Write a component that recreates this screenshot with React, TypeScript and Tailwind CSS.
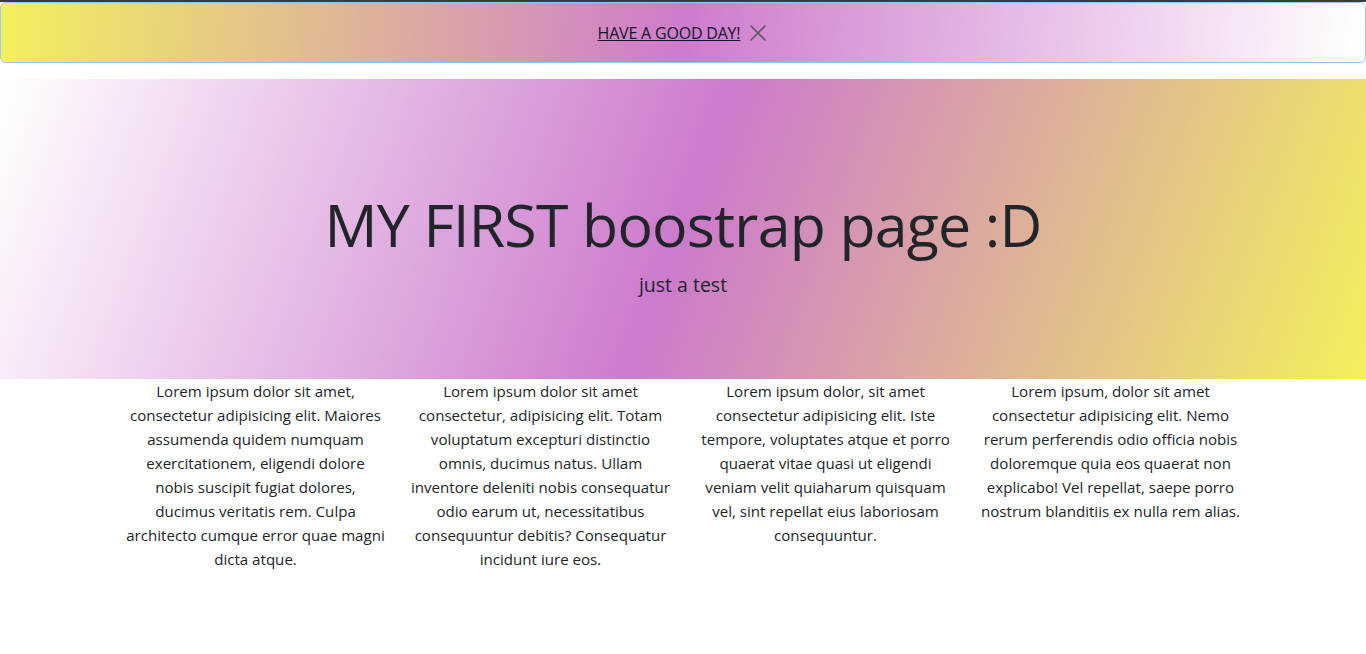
import React from 'react';

const columns: string[][] = [
  [
    'Lorem ipsum dolor sit amet,',
    'consectetur adipisicing elit. Maiores',
    'assumenda quidem numquam',
    'exercitationem, eligendi dolore',
    'nobis suscipit fugiat dolores,',
    'ducimus veritatis rem. Culpa',
    'architecto cumque error quae magni',
    'dicta atque.',
  ],
  [
    'Lorem ipsum dolor sit amet',
    'consectetur, adipisicing elit. Totam',
    'voluptatum excepturi distinctio',
    'omnis, ducimus natus. Ullam',
    'inventore deleniti nobis consequatur',
    'odio earum ut, necessitatibus',
    'consequuntur debitis? Consequatur',
    'incidunt iure eos.',
  ],
  [
    'Lorem ipsum dolor, sit amet',
    'consectetur adipisicing elit. Iste',
    'tempore, voluptates atque et porro',
    'quaerat vitae quasi ut eligendi',
    'veniam velit quiaharum quisquam',
    'vel, sint repellat eius laboriosam',
    'consequuntur.',
  ],
  [
    'Lorem ipsum, dolor sit amet',
    'consectetur adipisicing elit. Nemo',
    'rerum perferendis odio officia nobis',
    'doloremque quia eos quaerat non',
    'explicabo! Vel repellat, saepe porro',
    'nostrum blanditiis ex nulla rem alias.',
  ],
];

const App = () => {
  return (
    <div className="min-h-[654px] bg-white text-[#212529] font-['Open_Sans',sans-serif]">
      <div className="h-[2px] bg-[#3a3a3a]" />

      {/* alert */}
      <div className="h-[61px] mb-4 flex items-center justify-center rounded-md border border-[#9ec5fe] bg-[linear-gradient(95deg,#f2f05e_0%,#cd7bcd_50%,#ffffff_100%)]">
        <a href="#" className="text-[16px] underline text-[#14142a] tracking-[-0.2px]">
          HAVE A GOOD DAY!
        </a>
        <button className="ml-2 w-5 h-5 flex items-center justify-center text-[#5f5866]">
          <svg width="18" height="18" viewBox="0 0 18 18" fill="none" stroke="currentColor" strokeWidth="1.6">
            <path d="M1.5 1.5 L16.5 16.5 M16.5 1.5 L1.5 16.5" />
          </svg>
        </button>
      </div>

      {/* hero */}
      <div className="h-[300px] pt-[116px] flex flex-col items-center bg-[linear-gradient(110deg,#ffffff_0%,#cc7acc_50%,#f2f05c_100%)]">
        <h1 className="text-[59px] font-normal leading-none tracking-[-0.8px]">MY FIRST boostrap page :D</h1>
        <p className="text-[19.5px] font-normal leading-[30px] mt-[16px]">just a test</p>
      </div>

      {/* columns */}
      <div className="w-[1140px] mx-auto grid grid-cols-4">
        {columns.map((lines, i) => (
          <div key={i} className="px-3 text-center text-[15.1px] leading-6">
            {lines.map((l, j) => (
              <div key={j} className="whitespace-nowrap">{l}</div>
            ))}
          </div>
        ))}
      </div>
    </div>
  );
};

export default App;
